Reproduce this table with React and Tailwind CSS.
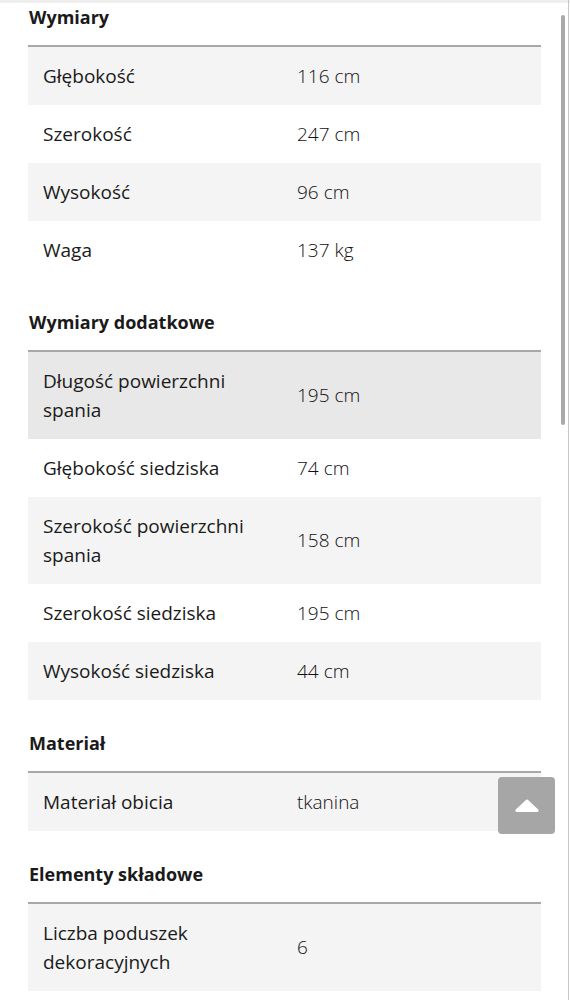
import React from 'react';

const sections = [
    {
        title: 'Wymiary',
        rows: [
            ['Głębokość', '116 cm'],
            ['Szerokość', '247 cm'],
            ['Wysokość', '96 cm'],
            ['Waga', '137 kg'],
        ],
    },
    {
        title: 'Wymiary dodatkowe',
        rows: [
            ['Długość powierzchni spania', '195 cm', true],
            ['Głębokość siedziska', '74 cm'],
            ['Szerokość powierzchni spania', '158 cm'],
            ['Szerokość siedziska', '195 cm'],
            ['Wysokość siedziska', '44 cm'],
        ],
    },
    {
        title: 'Materiał',
        rows: [['Materiał obicia', 'tkanina']],
    },
    {
        title: 'Elementy składowe',
        rows: [['Liczba poduszek dekoracyjnych', '6']],
    },
];

const SpecRow = ({ label, value, index, active }) => {
    const bg = active ? 'bg-[#e8e8e8]' : index % 2 === 0 ? 'bg-[#f4f4f4]' : 'bg-white';
    return (
        <div className={`flex items-center ${bg}`}>
            <div className="w-[254px] shrink-0 py-[14.5px] pl-[15px] pr-[20px] text-[19px] leading-[29px] text-[#1a1a1a]">
                {label}
            </div>
            <div className="flex-1 px-[15px] py-[14.5px] text-[19px] leading-[29px] font-light text-[#111111]">
                {value}
            </div>
        </div>
    );
};

const Section = ({ title, rows, first }) => (
    <section className={first ? 'pt-0' : 'pt-[29px]'}>
        <h2 className="pl-[1px] text-[18px] leading-[28px] font-bold text-[#1a1a1a]">{title}</h2>
        <div className="mt-[14px] border-t-2 border-[#a8a8a8]">
            {rows.map(([label, value, active], i) => (
                <SpecRow key={label} label={label} value={value} index={i} active={active} />
            ))}
        </div>
    </section>
);

export default function App() {
    return (
        <div
            className="relative min-h-[1000px] bg-white border-t-[3px] border-[#eeeeee]"
            style={{ fontFamily: '"Open Sans", "Noto Sans", sans-serif' }}
        >
            <div className="pl-[28px] pr-[29px] pb-[40px]">
                {sections.map((s, i) => (
                    <Section key={s.title} title={s.title} rows={s.rows} first={i === 0} />
                ))}
            </div>

            {/* right edge + scrollbar */}
            <div className="fixed top-0 right-[1px] h-full w-px bg-[#c8c8c8]" />
            <div className="fixed top-[15px] right-[5px] h-[410px] w-[4px] rounded-full bg-[#a9a9a9]" />

            {/* scroll to top */}
            <button
                type="button"
                className="fixed left-[498px] top-[777px] flex h-[57px] w-[57px] items-center justify-center rounded-[4px] bg-[#a6a6a6]"
            >
                <svg width="26" height="14" viewBox="0 0 26 14">
                    <path d="M11.4 1.4a2.2 2.2 0 0 1 3.2 0l9.6 9.2c.9.9.3 2.4-1 2.4H2.8c-1.3 0-1.9-1.5-1-2.4z" fill="#fff" />
                </svg>
            </button>
        </div>
    );
}
